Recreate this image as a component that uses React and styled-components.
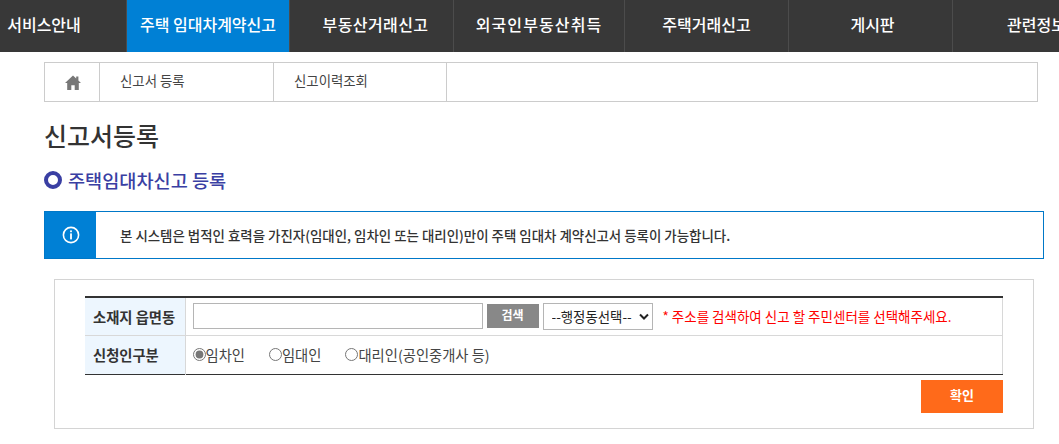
import React from "react";
import styled, { createGlobalStyle } from "styled-components";

const Global = createGlobalStyle`
  html, body {
    margin: 0;
    padding: 0;
    width: 1059px;
    height: 444px;
    overflow: hidden;
    background: #fff;
    font-family: "Noto Sans CJK KR", "Noto Sans", sans-serif;
    color: #333;
  }
`;

const Nav = styled.nav`
  display: flex;
  height: 52px;
  background: #383838;
  margin-left: -38px;
  width: 1240px;
`;

const NavItem = styled.a`
  flex: none;
  box-sizing: border-box;
  width: ${(p) => p.$width || 164}px;
  display: flex;
  align-items: center;
  justify-content: center;
  border-right: 1px solid #4c4c4c;
  background: ${(p) => (p.$active ? "#0080d5" : "transparent")};
  color: #fff;
  font-size: 16px;
  font-weight: 500;
  letter-spacing: ${(p) => p.$track || 0}px;
  padding: 0 0 4px ${(p) => p.$indent || 0}px;
  white-space: nowrap;
`;

const Content = styled.main`
  padding: 10px 15px 0 44px;
`;

const Crumbs = styled.div`
  display: flex;
  box-sizing: border-box;
  width: 994px;
  height: 40px;
  border: 1px solid #ccc;
`;

const HomeCell = styled.div`
  box-sizing: border-box;
  width: 55px;
  flex: none;
  display: flex;
  align-items: center;
  justify-content: center;
  padding-left: 2px;
  border-right: 1px solid #ccc;
  svg {
    display: block;
  }
`;

const Crumb = styled.a`
  box-sizing: border-box;
  width: ${(p) => p.$width}px;
  flex: none;
  padding-left: 20px;
  border-right: 1px solid #ccc;
  font-size: 13.4px;
  line-height: 35px;
  color: #444;
`;

const Title = styled.h1`
  margin: 15px 0 0;
  font-size: 25px;
  font-weight: 500;
  line-height: 36px;
  color: #333;
`;

const SubTitle = styled.h2`
  display: flex;
  align-items: center;
  gap: 6px;
  margin: 14px 0 0;
  font-size: 18.6px;
  font-weight: 500;
  line-height: 26px;
  color: #3a3fa3;
`;

const Ring = styled.span`
  box-sizing: border-box;
  width: 18px;
  height: 18px;
  border: 4px solid #3a3fa3;
  border-radius: 50%;
`;

const Notice = styled.div`
  box-sizing: border-box;
  display: flex;
  align-items: center;
  width: 1000px;
  height: 48px;
  margin-top: 18px;
  border: 1px solid #0078c8;
`;

const NoticeIcon = styled.div`
  width: 51px;
  align-self: stretch;
  flex: none;
  display: flex;
  align-items: center;
  justify-content: center;
  background: #0080d5;
`;

const NoticeText = styled.p`
  margin: 0 0 0 24px;
  font-size: 13.45px;
  font-weight: 500;
  color: #333;
  white-space: nowrap;
`;

const Panel = styled.section`
  box-sizing: border-box;
  width: 980px;
  height: 150px;
  margin: 20px 0 0 10px;
  padding: 16px 30px 0;
  border: 1px solid #d4d4d4;
`;

const Table = styled.table`
  width: 918px;
  border-collapse: collapse;
  table-layout: fixed;
  border-top: 2px solid #333;
  border-bottom: 1px solid #333;
  border-right: 1px solid #d8d8d8;
`;

const Row = styled.tr`
  height: ${(p) => p.$height}px;
  & + & {
    border-top: 1px solid #d8d8d8;
  }
`;

const Th = styled.th`
  box-sizing: border-box;
  width: 100px;
  padding: 0 0 0 8px;
  text-align: left;
  font-size: 14.3px;
  font-weight: 700;
  color: #333;
  background: #edf6fe;
  border-right: 1px solid #d8d8d8;
  white-space: nowrap;
`;

const Td = styled.td`
  padding: 0 0 0 7px;
`;

const Line = styled.div`
  display: flex;
  align-items: center;
`;

const TextInput = styled.input`
  box-sizing: border-box;
  width: 290px;
  height: 26px;
  margin: 0;
  border: 1px solid #b5b5b5;
  background: #fff;
`;

const SearchButton = styled.button`
  width: 52px;
  height: 24px;
  margin-left: 4px;
  padding: 0 0 4px;
  border: 0;
  background: #888;
  color: #fff;
  font-family: inherit;
  font-size: 12px;
  font-weight: 700;
`;

const DongSelect = styled.select`
  box-sizing: border-box;
  width: 110px;
  height: 27px;
  margin: 0 0 0 4px;
  padding: 0 0 0 8px;
  appearance: none;
  border: 1px solid #b5b5b5;
  background: #fff url("data:image/svg+xml,%3Csvg xmlns='http://www.w3.org/2000/svg' width='10' height='7'%3E%3Cpath d='M1 1.5l4 4 4-4' fill='none' stroke='%23222' stroke-width='2'/%3E%3C/svg%3E") no-repeat right 3px center;
  color: #222;
  font-family: inherit;
  font-size: 13.4px;
`;

const Hint = styled.span`
  margin-left: 10px;
  font-size: 13.5px;
  color: #f00;
  white-space: nowrap;
`;

const RadioLabel = styled.label`
  display: inline-flex;
  align-items: center;
  margin-right: ${(p) => p.$gap}px;
  padding-bottom: 3px;
  font-size: 14.3px;
  color: #444;
  input {
    width: 13px;
    height: 13px;
    margin: 0;
    accent-color: #777;
  }
`;

const Actions = styled.div`
  display: flex;
  justify-content: flex-end;
  margin-top: 5px;
`;

const Confirm = styled.button`
  width: 82px;
  height: 33px;
  padding: 0 0 3px;
  border: 0;
  background: #ff6a1a;
  color: #fff;
  font-family: inherit;
  font-size: 13px;
  font-weight: 700;
`;

const menus = [
  { label: "서비스안내", width: 165 },
  { label: "주택 임대차계약신고", active: true, width: 163 },
  { label: "부동산거래신고", track: 0.4, indent: 8 },
  { label: "외국인부동산취득", width: 171, track: 1.1 },
  { label: "주택거래신고" },
  { label: "게시판", indent: 4 },
  { label: "관련정보", indent: 4 },
];

const radios = [
  { label: "임차인", gap: 24, checked: true },
  { label: "임대인", gap: 24 },
  { label: "대리인(공인중개사 등)", gap: 0 },
];

export default function App() {
  return (
    <>
      <Global />
      <Nav>
        {menus.map((m) => (
          <NavItem
            key={m.label}
            $active={m.active}
            $width={m.width}
            $track={m.track}
            $indent={m.indent}
          >
            {m.label}
          </NavItem>
        ))}
      </Nav>
      <Content>
        <Crumbs>
          <HomeCell>
            <svg width="16" height="15" viewBox="0 0 16 15">
              <path
                fill="#777"
                d="M8 0.5 L0 8 H2.2 V15 H6.3 V10.2 H9.7 V15 H13.8 V8 H16 L13.4 5.5 V1.5 H11.2 V3.4 Z"
              />
            </svg>
          </HomeCell>
          <Crumb $width={174}>신고서 등록</Crumb>
          <Crumb $width={173}>신고이력조회</Crumb>
        </Crumbs>
        <Title>신고서등록</Title>
        <SubTitle>
          <Ring />
          주택임대차신고 등록
        </SubTitle>
        <Notice>
          <NoticeIcon>
            <svg width="18" height="18" viewBox="0 0 18 18" fill="none">
              <circle cx="9" cy="9" r="7.6" stroke="#fff" strokeWidth="1.6" />
              <rect x="8.1" y="7.4" width="1.8" height="6" fill="#fff" />
              <rect x="8.1" y="4.4" width="1.8" height="1.8" fill="#fff" />
            </svg>
          </NoticeIcon>
          <NoticeText>
            본 시스템은 법적인 효력을 가진자(임대인, 임차인 또는 대리인)만이 주택 임대차 계약신고서 등록이 가능합니다.
          </NoticeText>
        </Notice>
        <Panel>
          <Table>
            <tbody>
              <Row $height={38}>
                <Th>소재지 읍면동</Th>
                <Td>
                  <Line>
                    <TextInput type="text" />
                    <SearchButton type="button">검색</SearchButton>
                    <DongSelect defaultValue="">
                      <option value="">--행정동선택--</option>
                    </DongSelect>
                    <Hint>* 주소를 검색하여 신고 할 주민센터를 선택해주세요.</Hint>
                  </Line>
                </Td>
              </Row>
              <Row $height={39}>
                <Th>신청인구분</Th>
                <Td>
                  {radios.map((r) => (
                    <RadioLabel key={r.label} $gap={r.gap}>
                      <input type="radio" name="applicant" defaultChecked={r.checked} />
                      {r.label}
                    </RadioLabel>
                  ))}
                </Td>
              </Row>
            </tbody>
          </Table>
          <Actions>
            <Confirm type="button">확인</Confirm>
          </Actions>
        </Panel>
      </Content>
    </>
  );
}
